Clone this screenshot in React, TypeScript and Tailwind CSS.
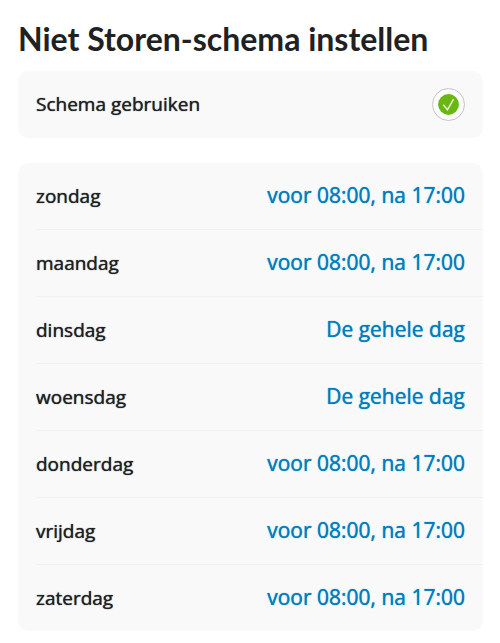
import React from "react";

const days = [
  { name: "zondag", value: "voor 08:00, na 17:00" },
  { name: "maandag", value: "voor 08:00, na 17:00" },
  { name: "dinsdag", value: "De gehele dag" },
  { name: "woensdag", value: "De gehele dag" },
  { name: "donderdag", value: "voor 08:00, na 17:00" },
  { name: "vrijdag", value: "voor 08:00, na 17:00" },
  { name: "zaterdag", value: "voor 08:00, na 17:00" },
];

const App = () => {
  const [enabled, setEnabled] = React.useState(true);

  return (
    <main className="pl-[18px] pr-[17px] pt-4 pb-3 font-['Open_Sans',sans-serif] text-[#202123]">
      <h1 className="text-[32px] leading-[46px] font-bold whitespace-nowrap font-['Lato',sans-serif]">
        Niet Storen-schema instellen
      </h1>

      <label className="mt-[9px] flex h-[67px] items-center justify-between rounded-[10px] bg-[#f9f9f9] px-[18px] text-[19px] font-medium [text-shadow:0_0_1px_currentColor]">
        Schema gebruiken
        <span className="relative flex size-[33px]">
          <input
            type="checkbox"
            checked={enabled}
            onChange={(e) => setEnabled(e.target.checked)}
            className="size-full cursor-pointer appearance-none rounded-full border border-[#c4c4c6] bg-[#fcfcfc]"
          />
          {enabled && (
            <svg viewBox="0 0 33 33" className="pointer-events-none absolute inset-0 size-full">
              <circle cx="16.5" cy="16.5" r="10.4" fill="#68b812" />
              <path d="M11.2 16.8l4.3 5 6-10.6" fill="none" stroke="#e9f7d8" strokeWidth="1.5" />
            </svg>
          )}
        </span>
      </label>

      <ul className="mt-[25px] rounded-[10px] bg-[#f9f9f9] pl-[18px]">
        {days.map((day) => (
          <li
            key={day.name}
            className="flex h-[67px] items-center justify-between border-b border-[#f1f1f1] pr-[18px] last:h-[66px] last:border-b-0"
          >
            <span className="text-[19px] font-medium [text-shadow:0_0_1px_currentColor]">
              {day.name}
            </span>
            <button
              type="button"
              className="cursor-pointer text-[21px] font-medium text-[#007dbd] [text-shadow:0_0_1px_currentColor]"
            >
              {day.value}
            </button>
          </li>
        ))}
      </ul>
    </main>
  );
};

export default App;
